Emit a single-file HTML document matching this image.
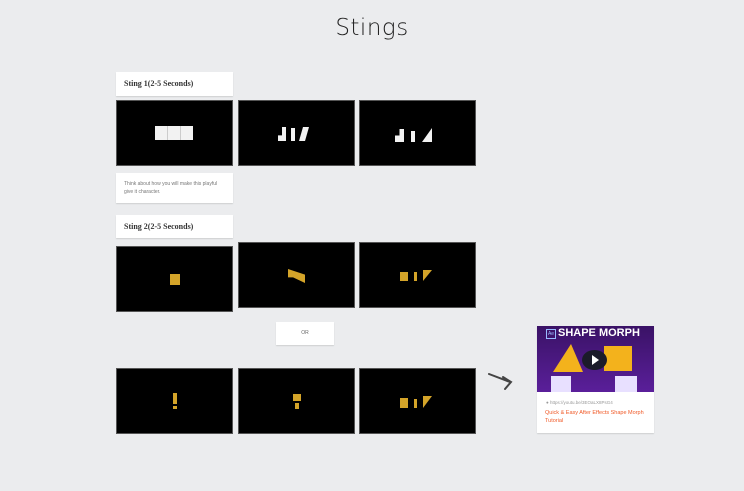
<!DOCTYPE html>
<html><head><style>
body{margin:0;width:744px;height:491px;background:#ebecee;position:relative;overflow:hidden;font-family:"Liberation Sans",sans-serif}
.a{position:absolute}
.card{position:absolute;background:#fff;box-shadow:0 1px 1px rgba(0,0,0,.12)}
.f{position:absolute;background:#000;border:1px solid #555;box-sizing:border-box}
.h{font-family:"Liberation Serif",serif;font-weight:bold;font-size:8px;color:#333;padding:7px 0 0 8px}
.w{background:#f2f2f2}.g{background:#d4a429}
</style></head><body>
<div class="a" style="left:0;width:744px;top:15px;text-align:center;font-size:23px;color:#222;font-family:'DejaVu Sans',sans-serif;font-weight:200;letter-spacing:0.5px">Stings</div>

<div class="card h" style="left:116px;top:72px;width:117px;height:24px;box-sizing:border-box">Sting 1(2-5 Seconds)</div>
<div class="f" style="left:116px;top:100px;width:117px;height:66px"><div class="a w" style="left:38px;top:25px;width:38px;height:14px"></div><div class="a" style="left:50px;top:25px;width:1px;height:14px;background:#ccc"></div><div class="a" style="left:63px;top:25px;width:1px;height:14px;background:#ccc"></div></div>
<div class="f" style="left:238px;top:100px;width:117px;height:66px"><div class="a w" style="left:39px;top:26px;width:8px;height:14px;clip-path:polygon(50% 0,100% 0,100% 100%,0 100%,0 60%,50% 60%)"></div><div class="a w" style="left:52px;top:27px;width:4px;height:13px"></div><div class="a w" style="left:60px;top:26px;width:10px;height:14px;clip-path:polygon(40% 0,100% 0,60% 100%,0 100%)"></div></div>
<div class="f" style="left:359px;top:100px;width:117px;height:66px"><div class="a w" style="left:35px;top:28px;width:9px;height:13px;clip-path:polygon(50% 0,100% 0,100% 100%,0 100%,0 50%,50% 50%)"></div><div class="a w" style="left:51px;top:30px;width:4px;height:11px"></div><div class="a w" style="left:62px;top:27px;width:10px;height:14px;clip-path:polygon(100% 0,0 100%,100% 100%)"></div></div>

<div class="card" style="left:116px;top:173px;width:117px;height:30px;font-size:5px;color:#777;padding:7px 8px;box-sizing:border-box;line-height:8px">Think about how you will make this playful give it character.</div>

<div class="card h" style="left:116px;top:215px;width:117px;height:23px;box-sizing:border-box">Sting 2(2-5 Seconds)</div>
<div class="f" style="left:116px;top:246px;width:117px;height:66px"><div class="a g" style="left:53px;top:27px;width:10px;height:11px"></div></div>
<div class="f" style="left:238px;top:242px;width:117px;height:66px"><div class="a g" style="left:49px;top:26px;width:17px;height:14px;clip-path:polygon(0 0,100% 40%,100% 100%,30% 60%,0 60%)"></div></div>
<div class="f" style="left:359px;top:242px;width:117px;height:66px"><div class="a g" style="left:40px;top:29px;width:8px;height:9px"></div><div class="a g" style="left:54px;top:29px;width:3px;height:9px"></div><div class="a g" style="left:63px;top:27px;width:9px;height:11px;clip-path:polygon(0 0,100% 0,0 100%)"></div></div>

<div class="card" style="left:276px;top:322px;width:58px;height:23px;font-size:5px;color:#666;text-align:center;line-height:23px">OR</div>

<div class="f" style="left:116px;top:368px;width:117px;height:66px"><div class="a g" style="left:56px;top:24px;width:4px;height:11px"></div><div class="a g" style="left:56px;top:37px;width:4px;height:3px"></div></div>
<div class="f" style="left:238px;top:368px;width:117px;height:66px"><div class="a g" style="left:54px;top:25px;width:8px;height:7px"></div><div class="a g" style="left:56px;top:34px;width:4px;height:6px"></div></div>
<div class="f" style="left:359px;top:368px;width:117px;height:66px"><div class="a g" style="left:40px;top:29px;width:8px;height:10px"></div><div class="a g" style="left:54px;top:30px;width:3px;height:9px"></div><div class="a g" style="left:63px;top:27px;width:9px;height:12px;clip-path:polygon(0 0,100% 0,0 100%)"></div></div>

<svg class="a" style="left:486px;top:368px" width="30" height="22"><path d="M3 6 L24 14 M17 9 L25 14 L19 21" stroke="#444" stroke-width="2" fill="none" stroke-linecap="round"/></svg>

<div class="card" style="left:537px;top:326px;width:117px;height:107px">
<div class="a" style="left:0;top:0;width:117px;height:66px;background:linear-gradient(#3a1266,#5a1f9a);overflow:hidden">
<div class="a" style="left:9px;top:3px;width:8px;height:8px;border:1px solid #9bf;font-size:5px;color:#9bf;line-height:8px;text-align:center">Ae</div>
<div class="a" style="left:21px;top:1px;font-size:11px;font-weight:bold;color:#fff">SHAPE MORPH</div>
<div class="a" style="left:16px;top:18px;width:30px;height:28px;background:#f3b21c;clip-path:polygon(60% 0,100% 100%,0 100%)"></div>
<div class="a" style="left:67px;top:20px;width:28px;height:25px;background:#f3b21c"></div>
<div class="a" style="left:45px;top:24px;width:25px;height:20px;border-radius:50%;background:#1b1b2a"></div>
<div class="a" style="left:55px;top:29px;width:0;height:0;border-left:7px solid #fff;border-top:5px solid transparent;border-bottom:5px solid transparent"></div>
<div class="a" style="left:14px;top:50px;width:20px;height:16px;background:#e8e0ff"></div>
<div class="a" style="left:78px;top:50px;width:22px;height:16px;background:#e8e0ff"></div>
</div>
<div class="a" style="left:9px;top:74px;font-size:4.5px;color:#999">● https://youtu.be/3EOaLX8PsG4</div>
<div class="a" style="left:8px;top:83px;font-size:5.5px;color:#f05a28;line-height:8px;width:100px">Quick &amp; Easy After Effects Shape Morph Tutorial</div>
</div>
</body></html>
